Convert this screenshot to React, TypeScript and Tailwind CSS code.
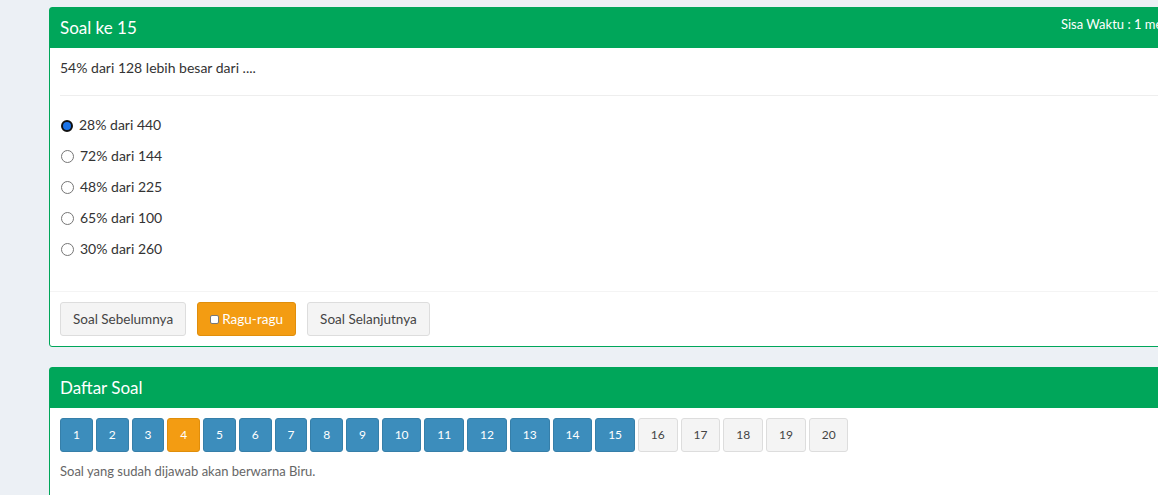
import React from "react";

const options = ["28% dari 440", "72% dari 144", "48% dari 225", "65% dari 100", "30% dari 260"];

const nums = Array.from({ length: 20 }, (_, i) => i + 1);

export default function App() {
  return (
    <div
      className="w-full h-[495px] overflow-hidden bg-[#ecf0f5] text-[#333]"
      style={{ fontFamily: "Lato, 'Open Sans', sans-serif" }}
    >
      <div className="pl-[49px] pt-[7px] w-[1300px]">
        {/* Soal box */}
        <div className="w-[1240px] rounded-[3px] border border-[#00a65a] bg-white">
          <div className="flex items-start bg-[#00a65a] text-white h-[40px] px-[10px]">
            <div className="w-[1001px] text-[17px] leading-[20px] pt-[10px]">Soal ke 15</div>
            <div className="text-[13px] leading-[16px] pt-[8px] whitespace-nowrap">Sisa Waktu : 1 menit 23 detik</div>
          </div>
          <div className="px-[10px] pt-[10px]">
            <p className="text-[14px] leading-[20px]">54% dari 128 lebih besar dari ....</p>
            <div className="mt-[17px] border-t border-[#eee]" />
            <div className="pt-[18px] pb-[33px] flex flex-col gap-[11px]">
              {options.map((o, i) => (
                <label key={o} className="flex items-center h-[20px] text-[14px]">
                  {i === 0 ? (
                    <span className="ml-[1px] mt-[3px] w-[12px] h-[12px] rounded-full bg-[#1a73e8] border-[2px] border-[#111]" />
                  ) : (
                    <span className="ml-[1px] mt-[3px] w-[13px] h-[13px] rounded-full bg-white border border-[#767676]" />
                  )}
                  <span className="ml-[6px]">{o}</span>
                </label>
              ))}
            </div>
          </div>
          <div className="border-t border-[#f4f4f4] px-[10px] py-[10px] flex gap-[11px]">
            <button className="h-[34px] px-[12px] rounded-[3px] bg-[#f4f4f4] border border-[#ddd] text-[#444] text-[13.5px]">
              Soal Sebelumnya
            </button>
            <button className="h-[34px] w-[99px] rounded-[3px] bg-[#f39c12] border border-[#e08e0b] text-white text-[13.5px] flex items-center justify-center">
              <span className="inline-block w-[9px] h-[9px] bg-white border border-[#777] rounded-[2px] mr-[3px]" />
              Ragu-ragu
            </button>
            <button className="h-[34px] px-[12px] rounded-[3px] bg-[#f4f4f4] border border-[#ddd] text-[#444] text-[13.5px]">
              Soal Selanjutnya
            </button>
          </div>
        </div>

        {/* Daftar soal */}
        <div className="mt-[20px] w-[1240px] rounded-[3px] border border-[#00a65a] bg-white h-[200px]">
          <div className="bg-[#00a65a] text-white h-[40px] px-[10px]">
            <div className="text-[17px] leading-[20px] pt-[10px]">Daftar Soal</div>
          </div>
          <div className="px-[10px] pt-[10px]">
            <div className="flex gap-[3px]">
              {nums.map((n) => {
                const cls =
                  n === 4
                    ? "bg-[#f39c12] border-[#e08e0b] text-white"
                    : n <= 15
                    ? "bg-[#3c8dbc] border-[#367fa9] text-white"
                    : "bg-[#f4f4f4] border-[#ddd] text-[#444]";
                return (
                  <button
                    key={n}
                    className={`h-[34px] px-[11.9px] min-w-[32px] rounded-[3px] border text-[12px] ${cls}`}
                  >
                    {n}
                  </button>
                );
              })}
            </div>
            <p className="mt-[10px] text-[13px] leading-[18px] text-[#666]">
              Soal yang sudah dijawab akan berwarna Biru.
            </p>
          </div>
        </div>
      </div>
    </div>
  );
}
